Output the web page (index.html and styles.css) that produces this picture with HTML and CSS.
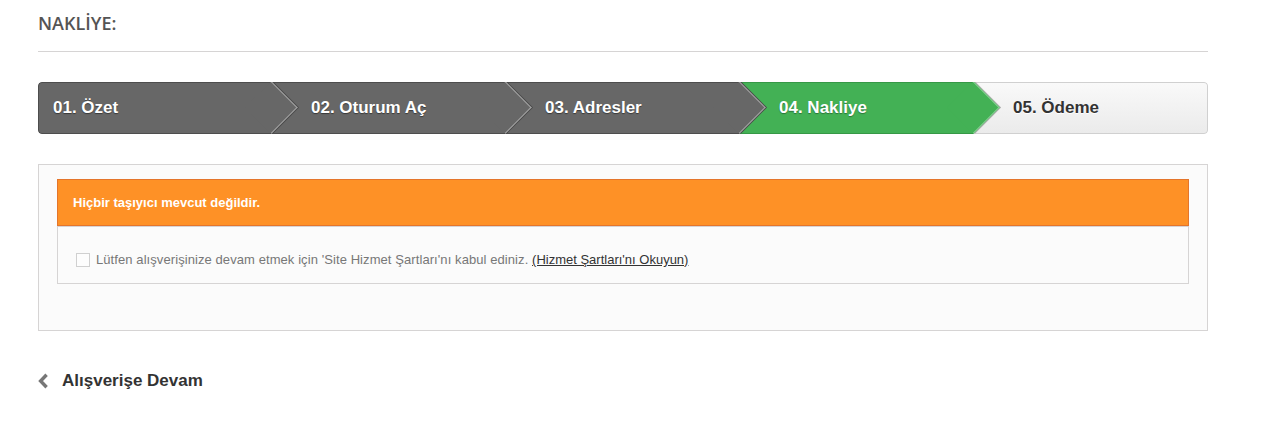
FILE: index.html
```html
<!DOCTYPE html>
<html lang="tr">
<head>
<meta charset="utf-8">
<title>Nakliye</title>
<link rel="stylesheet" href="styles.css">
</head>
<body>
<div class="page">
  <h1 class="page-heading">NAKLİYE:</h1>

  <ul class="steps">
    <li class="step step-done step-first">01. Özet</li>
    <li class="step step-done">02. Oturum Aç</li>
    <li class="step step-done">03. Adresler</li>
    <li class="step step-current">04. Nakliye</li>
    <li class="step step-todo step-last">05. Ödeme</li>
  </ul>

  <div class="order-box">
    <p class="alert">Hiçbir taşıyıcı mevcut değildir.</p>
    <div class="terms">
      <span class="checkbox"></span>
      <span class="terms-text">Lütfen alışverişinize devam etmek için 'Site Hizmet Şartları'nı kabul ediniz. <a class="terms-link" href="#">(Hizmet Şartları'nı Okuyun)</a></span>
    </div>
  </div>

  <a class="back-link" href="#">
    <svg class="back-icon" width="11" height="16" viewBox="0 0 11 16"><path d="M8.6 1.8 L2.6 8 L8.6 14.2" fill="none" stroke="#777" stroke-width="3.4"/></svg>
    <span>Alışverişe Devam</span>
  </a>
</div>
</body>
</html>
```

FILE: styles.css
```css
html, body {
  margin: 0;
  padding: 0;
  background: #fff;
}

body {
  font-family: "Liberation Sans", Arial, sans-serif;
  color: #777;
}

.page {
  width: 1170px;
  padding-left: 38px;
}

.page-heading {
  margin: 0;
  padding-top: 12px;
  padding-bottom: 17px;
  border-bottom: 1px solid #d6d4d4;
  font-family: "Open Sans", sans-serif;
  font-weight: 600;
  font-size: 18px;
  line-height: 22px;
  color: #555454;
}

.steps {
  list-style: none;
  margin: 30px 0 0;
  padding: 0;
  display: flex;
  border-radius: 4px;
  overflow: hidden;
}

.step {
  position: relative;
  flex: none;
  width: 234px;
  box-sizing: border-box;
  height: 52px;
  line-height: 50px;
  padding-left: 39px;
  font-weight: bold;
  font-size: 17px;
  border-top: 1px solid;
  border-bottom: 1px solid;
  white-space: nowrap;
}

.step-first {
  padding-left: 14px;
  border-left: 1px solid;
  border-radius: 4px 0 0 4px;
}

.step-last {
  border-right: 1px solid;
  border-radius: 0 4px 4px 0;
}

.step-done {
  background: #676767;
  border-color: #4d4d4d;
  color: #fff;
  text-shadow: 0 1px 1px rgba(0, 0, 0, 0.45);
}

.step-current {
  background: #43b155;
  border-color: #369846;
  color: #fff;
  text-shadow: 0 1px 1px rgba(0, 0, 0, 0.35);
}

.step-todo {
  background: linear-gradient(#f9f9f9, #ebebeb);
  border-color: #d0d0d0;
  color: #333;
  text-shadow: 0 1px 0 #fff;
}

.step-done::after,
.step-current::after {
  content: "";
  position: absolute;
  z-index: 2;
  top: 6px;
  right: -18px;
  width: 36px;
  height: 36px;
  transform: rotate(45deg);
  background: #676767;
  border-top: 1px solid #a3a3a3;
  border-right: 1px solid #a3a3a3;
  box-shadow: 1px -1px 0 #4a4a4a;
}

.step-current::after {
  background: #43b155;
  border-top-color: #86cf92;
  border-right-color: #86cf92;
  box-shadow: 1px -1px 0 #a8a8a8;
}

.order-box {
  margin-top: 30px;
  border: 1px solid #d6d4d4;
  background: #fbfbfb;
  padding: 14px 18px 46px;
}

.alert {
  margin: 0;
  padding: 14px 15px;
  background: #fe9126;
  border: 1px solid #e4752b;
  color: #fff;
  font-weight: bold;
  font-size: 13px;
  line-height: 17px;
}

.terms {
  display: flex;
  align-items: center;
  border: 1px solid #d6d4d4;
  border-top: 1px solid #d6d4d4;
  padding: 23px 18px 14px;
  font-size: 13px;
  line-height: 19px;
  color: #777;
  letter-spacing: 0.08px;
}

.checkbox {
  flex: none;
  width: 12px;
  height: 12px;
  border: 1px solid #d0d0d0;
  background: #fdfdfd;
  margin-right: 6px;
}

.terms-link {
  color: #333;
  text-decoration: underline;
  letter-spacing: 0;
}

.back-link {
  display: inline-flex;
  align-items: center;
  margin-top: 40px;
  font-weight: bold;
  font-size: 17px;
  line-height: 20px;
  color: #333;
  text-decoration: none;
}

.back-icon {
  display: block;
  margin-right: 13px;
}
```
